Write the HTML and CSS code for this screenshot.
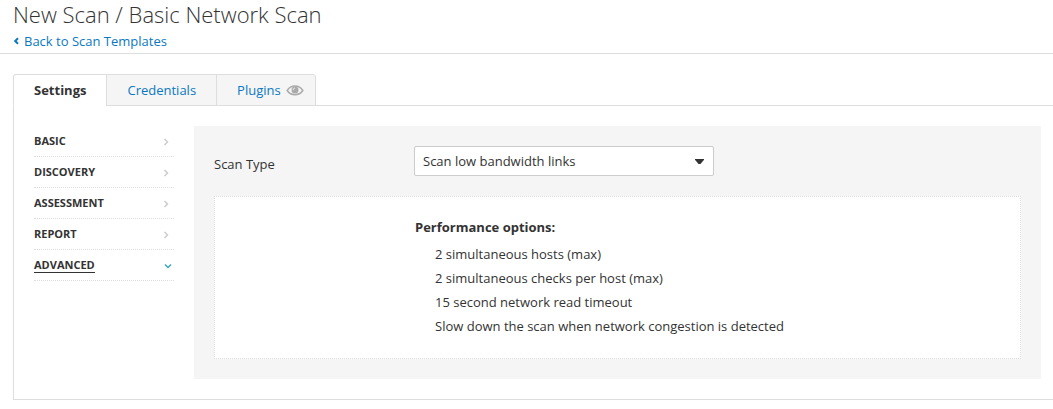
FILE: index.html
```html
<!DOCTYPE html>
<html lang="en">
<head>
<meta charset="utf-8">
<title>New Scan / Basic Network Scan</title>
<link rel="stylesheet" href="styles.css">
</head>
<body>
<header class="page-header">
  <h1 class="page-title">New Scan / Basic Network Scan</h1>
  <a class="back-link" href="#"><svg class="back-icon" viewBox="0 0 6 8" aria-hidden="true"><path d="M5 1.200 2.200 4 5 6.800"/></svg>Back to Scan Templates</a>
</header>
<main class="content">
  <nav class="tabs" aria-label="Scan configuration">
    <a class="tab tab-active" href="#" aria-current="page">Settings</a>
    <a class="tab" href="#">Credentials</a>
    <a class="tab" href="#">Plugins<svg class="eye-icon" viewBox="0 0 18 12" aria-hidden="true"><path class="eye-lid" d="M1.200 6.500C3 3.500 5.700 2 9 2s6 1.500 7.800 4.500C15 9.300 12.300 10.700 9 10.700S3 9.300 1.200 6.500Z"/><circle class="eye-iris" cx="9" cy="6" r="3.500"/><path class="eye-shine" d="M7.200 6c0-1.200.6-1.800 1.800-1.800"/></svg></a>
  </nav>
  <div class="panel">
    <nav class="side-nav" aria-label="Settings sections">
      <a class="side-item" href="#"><span class="side-label">BASIC</span><svg class="chevron" viewBox="0 0 8 8" aria-hidden="true"><path d="m2.500 1 3 3-3 3"/></svg></a>
      <a class="side-item" href="#"><span class="side-label">DISCOVERY</span><svg class="chevron" viewBox="0 0 8 8" aria-hidden="true"><path d="m2.500 1 3 3-3 3"/></svg></a>
      <a class="side-item" href="#"><span class="side-label">ASSESSMENT</span><svg class="chevron" viewBox="0 0 8 8" aria-hidden="true"><path d="m2.500 1 3 3-3 3"/></svg></a>
      <a class="side-item" href="#"><span class="side-label">REPORT</span><svg class="chevron" viewBox="0 0 8 8" aria-hidden="true"><path d="m2.500 1 3 3-3 3"/></svg></a>
      <a class="side-item side-item-open" href="#" aria-current="true"><span class="side-label">ADVANCED</span><svg class="chevron" viewBox="0 0 8 8" aria-hidden="true"><path d="m1 2.500 3 3 3-3"/></svg></a>
    </nav>
    <section class="form">
      <div class="field">
        <label class="field-label" for="scan-type">Scan Type</label>
        <div class="select-wrap">
          <select class="select" id="scan-type">
            <option>Scan low bandwidth links</option>
          </select>
          <svg class="caret" viewBox="0 0 9 5" aria-hidden="true"><path d="M0 0h9v.7L5.500 5h-2L0 .7Z"/></svg>
        </div>
      </div>
      <div class="summary">
        <h2 class="summary-title">Performance options:</h2>
        <ul class="summary-list">
          <li>2 simultaneous hosts (max)</li>
          <li>2 simultaneous checks per host (max)</li>
          <li>15 second network read timeout</li>
          <li>Slow down the scan when network congestion is detected</li>
        </ul>
      </div>
    </section>
  </div>
</main>
</body>
</html>
```

FILE: styles.css
```css
* {
  box-sizing: border-box;
}

body {
  margin: 0;
  background: #fff;
  color: #333;
  font-family: "Open Sans", "Noto Sans", sans-serif;
  font-size: 13px;
  line-height: 20px;
}

a {
  color: #0a78c2;
  text-decoration: none;
}

.page-header {
  padding: 0 13px 2px;
  border-bottom: 1px solid #ddd;
}

.page-title {
  margin: 0;
  padding-bottom: 2px;
  font-size: 22px;
  font-weight: 300;
  line-height: 29px;
}

.back-link {
  display: flex;
  align-items: center;
  gap: 5px;
  width: max-content;
}

.back-icon {
  width: 6px;
  height: 8px;
  fill: none;
  stroke: #0a78c2;
  stroke-width: 2;
}

.content {
  padding: 20px 0 9px 13px;
}

.tabs {
  display: flex;
  position: relative;
  margin-bottom: -1px;
}

.tab {
  display: flex;
  align-items: center;
  margin-left: -1px;
  padding: 5px 20px;
  height: 32px;
  border: 1px solid #ddd;
  background: #f5f5f5;
}

.tab:first-child {
  margin-left: 0;
  border-top-left-radius: 3px;
}

.tab:last-child {
  padding-right: 11px;
  border-top-right-radius: 3px;
}

.tab-active {
  border-bottom-color: #fff;
  background: #fff;
  color: #333;
  font-weight: 700;
}

.eye-icon {
  width: 18px;
  height: 12px;
  margin-left: 5px;
}

.eye-lid {
  fill: none;
  stroke: #aaa;
  stroke-width: 1.5;
}

.eye-iris {
  fill: #aaa;
}

.eye-shine {
  fill: none;
  stroke: #f5f5f5;
  stroke-width: 1;
}

.panel {
  display: flex;
  align-items: flex-start;
  gap: 20px;
  padding: 20px 12px 20px 20px;
  border: 1px solid #ddd;
  border-right: 0;
}

.side-nav {
  flex: 0 0 140px;
}

.side-item {
  display: flex;
  align-items: center;
  justify-content: space-between;
  height: 31px;
  padding-right: 4px;
  border-bottom: 1px dotted #ddd;
  color: #333;
  font-size: 11px;
  font-weight: 700;
  line-height: 14px;
}

.side-label {
  border-bottom: 1px solid transparent;
}

.side-item-open {
  padding-right: 2px;
}

.side-item-open .side-label {
  border-bottom-color: #333;
}

.chevron {
  width: 8px;
  height: 8px;
  margin-top: 2px;
  fill: none;
  stroke: #ccc;
  stroke-width: 1.5;
}

.side-item-open .chevron {
  stroke: #3aa6b9;
}

.form {
  flex: 1;
  padding: 20px;
  background: #f5f5f5;
}

.field {
  display: flex;
  align-items: flex-start;
  margin-bottom: 20px;
}

.field-label {
  flex: 0 0 200px;
  padding-top: 8px;
}

.select-wrap {
  display: grid;
  align-items: center;
  width: 300px;
}

.select {
  grid-area: 1 / 1;
  width: 100%;
  height: 30px;
  padding: 0 30px 0 8px;
  border: 1px solid #ccc;
  border-radius: 2px;
  background: #fff;
  color: #333;
  font: inherit;
  appearance: none;
}

.caret {
  grid-area: 1 / 1;
  justify-self: end;
  width: 9px;
  height: 5px;
  margin-right: 10px;
  fill: #333;
  pointer-events: none;
}

.summary {
  padding: 20px 20px 20px 200px;
  border: 1px dotted #ddd;
  background: #fff;
}

.summary-title {
  margin: 0 0 5px;
  font-size: 13px;
  font-weight: 700;
  line-height: 20px;
}

.summary-list {
  margin: 0;
  padding: 0 0 0 20px;
  line-height: 24px;
  list-style: none;
}
```
